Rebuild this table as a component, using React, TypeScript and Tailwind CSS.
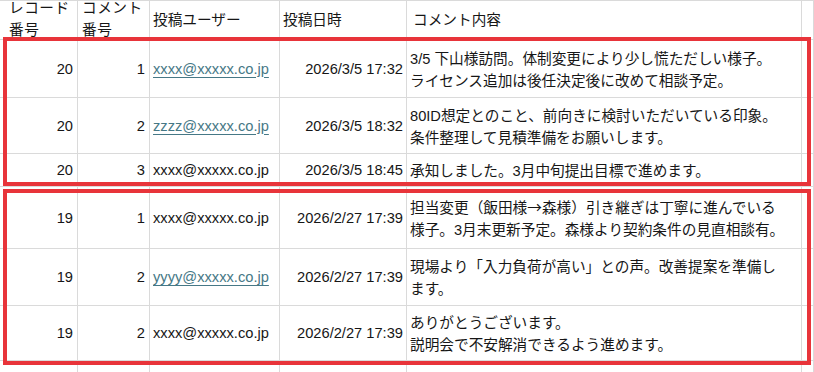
import React from 'react';

type Comment = {
  recordNo: number;
  commentNo: number;
  user: string;
  link?: boolean;
  postedAt: string;
  lines: React.ReactNode[];
  height: number;
};

const cjk = { fontFamily: '"Noto Sans CJK JP", sans-serif' };

const comments: Comment[] = [
  {
    recordNo: 20,
    commentNo: 1,
    user: 'xxxx@xxxxx.co.jp',
    link: true,
    postedAt: '2026/3/5 17:32',
    lines: ['3/5 下山様訪問。体制変更により少し慌ただしい様子。', 'ライセンス追加は後任決定後に改めて相談予定。'],
    height: 58,
  },
  {
    recordNo: 20,
    commentNo: 2,
    user: 'zzzz@xxxxx.co.jp',
    link: true,
    postedAt: '2026/3/5 18:32',
    lines: ['80ID想定とのこと、前向きに検討いただいている印象。', '条件整理して見積準備をお願いします。'],
    height: 56,
  },
  {
    recordNo: 20,
    commentNo: 3,
    user: 'xxxx@xxxxx.co.jp',
    postedAt: '2026/3/5 18:45',
    lines: ['承知しました。3月中旬提出目標で進めます。'],
    height: 33,
  },
  {
    recordNo: 19,
    commentNo: 1,
    user: 'xxxx@xxxxx.co.jp',
    postedAt: '2026/2/27 17:39',
    lines: [
      <>
        担当変更（飯田様<span style={cjk}>→</span>森様）引き継ぎは丁寧に進んでいる
      </>,
      '様子。3月末更新予定。森様より契約条件の見直相談有。',
    ],
    height: 62,
  },
  {
    recordNo: 19,
    commentNo: 2,
    user: 'yyyy@xxxxx.co.jp',
    link: true,
    postedAt: '2026/2/27 17:39',
    lines: ['現場より「入力負荷が高い」との声。改善提案を準備し', 'ます。'],
    height: 57,
  },
  {
    recordNo: 19,
    commentNo: 2,
    user: 'xxxx@xxxxx.co.jp',
    postedAt: '2026/2/27 17:39',
    lines: ['ありがとうございます。', '説明会で不安解消できるよう進めます。'],
    height: 55,
  },
];

const cell = 'flex shrink-0 items-center overflow-hidden border-r border-b border-[#dadada]';

export default function App() {
  return (
    <div
      className="relative h-[372px] w-[814px] overflow-hidden bg-white text-[14.67px] text-[#161616]"
      style={{ fontFamily: '"Liberation Sans", "Noto Sans CJK JP", sans-serif' }}
    >
      <div className="border-t border-[#dadada]">
        {/* Header */}
        <div className="flex h-[39px] leading-[22px]">
          <div className={`${cell} w-[78px] pl-[9px]`}>
            <div className="-mt-[2px] whitespace-nowrap tracking-[0.5px]">レコード<br />番号</div>
          </div>
          <div className={`${cell} w-[72px] pl-[4px]`}>
            <div className="-mt-[2px] whitespace-nowrap tracking-[0.5px]">コメント<br />番号</div>
          </div>
          <div className={`${cell} w-[130px] pl-[3px]`}>投稿ユーザー</div>
          <div className={`${cell} w-[127px] pl-[3px]`}>投稿日時</div>
          <div className={`${cell} w-[395px] pl-[6px]`}>コメント内容</div>
          <div className={`${cell} flex-1`} />
        </div>

        {comments.map((c, i) => (
          <div key={i} className="flex" style={{ height: c.height }}>
            <div className={`${cell} w-[78px] justify-end pr-[4px]`}>{c.recordNo}</div>
            <div className={`${cell} w-[72px] justify-end pr-[4px]`}>{c.commentNo}</div>
            <div className={`${cell} w-[130px] pl-[3px]`}>
              <span className={c.link ? 'text-[#467886] underline underline-offset-[3px]' : ''}>{c.user}</span>
            </div>
            <div className={`${cell} w-[127px] justify-end whitespace-nowrap pr-[3px]`}>{c.postedAt}</div>
            <div className={`${cell} w-[395px] pl-[3px] pt-[2px] leading-[22px]`}>
              <div className="whitespace-nowrap">
                {c.lines.map((l, j) => (
                  <div key={j}>{l}</div>
                ))}
              </div>
            </div>
            <div className={`${cell} flex-1`} />
          </div>
        ))}

        {/* next row, cut off */}
        <div className="flex h-[30px]">
          <div className={`${cell} w-[78px]`} />
          <div className={`${cell} w-[72px]`} />
          <div className={`${cell} w-[130px]`} />
          <div className={`${cell} w-[127px]`} />
          <div className={`${cell} w-[395px]`} />
          <div className={`${cell} flex-1`} />
        </div>
      </div>

      {/* highlight frames */}
      <div className="absolute left-[3px] top-[37px] h-[149px] w-[808px] border-4 border-[#e8343a]" />
      <div className="absolute left-[3px] top-[189px] h-[176px] w-[808px] border-4 border-[#e8343a]" />
    </div>
  );
}
